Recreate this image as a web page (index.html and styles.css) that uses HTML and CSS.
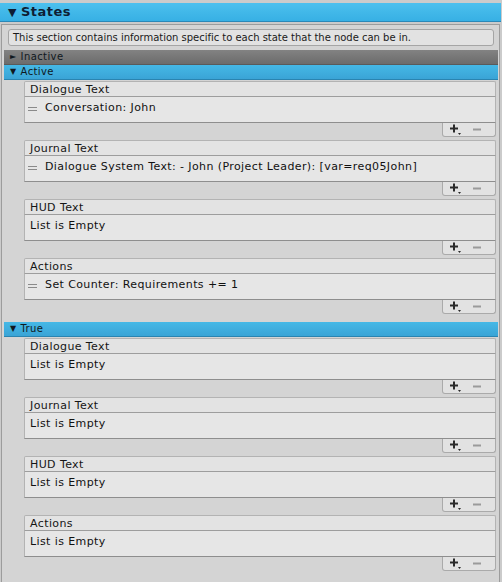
FILE: index.html
```html
<!DOCTYPE html>
<html>
<head>
<meta charset="utf-8">
<link rel="stylesheet" href="styles.css">
</head>
<body>
<div class="title"><span class="tri">▼</span>States</div>
<div class="panel">
  <div class="help">This section contains information specific to each state that the node can be in.</div>
  <div class="bar gray"><span class="arr">►</span>Inactive</div>
  <div class="bar blue"><span class="arr">▼</span>Active</div>
  <div class="lists">
    <div class="list">
      <div class="lh">Dialogue Text</div>
      <div class="lb"><span class="grip"></span>Conversation: John</div>
      <div class="lf"><svg class="plus" width="12" height="12" viewBox="0 0 12 12"><path d="M4 0.5v8M0 4.5h8" stroke="#2a2a2a" stroke-width="2"/><path d="M8 9h3l-1.5 2z" fill="#2a2a2a"/></svg><svg class="minus" width="8" height="3" viewBox="0 0 8 3"><path d="M0 1.5h8" stroke="#9a9a9a" stroke-width="2"/></svg></div>
    </div>
    <div class="list">
      <div class="lh">Journal Text</div>
      <div class="lb"><span class="grip"></span>Dialogue System Text: - John (Project Leader): [var=req05John]</div>
      <div class="lf"><svg class="plus" width="12" height="12" viewBox="0 0 12 12"><path d="M4 0.5v8M0 4.5h8" stroke="#2a2a2a" stroke-width="2"/><path d="M8 9h3l-1.5 2z" fill="#2a2a2a"/></svg><svg class="minus" width="8" height="3" viewBox="0 0 8 3"><path d="M0 1.5h8" stroke="#9a9a9a" stroke-width="2"/></svg></div>
    </div>
    <div class="list">
      <div class="lh">HUD Text</div>
      <div class="lb empty">List is Empty</div>
      <div class="lf"><svg class="plus" width="12" height="12" viewBox="0 0 12 12"><path d="M4 0.5v8M0 4.5h8" stroke="#2a2a2a" stroke-width="2"/><path d="M8 9h3l-1.5 2z" fill="#2a2a2a"/></svg><svg class="minus" width="8" height="3" viewBox="0 0 8 3"><path d="M0 1.5h8" stroke="#9a9a9a" stroke-width="2"/></svg></div>
    </div>
    <div class="list">
      <div class="lh">Actions</div>
      <div class="lb"><span class="grip"></span>Set Counter: Requirements += 1</div>
      <div class="lf"><svg class="plus" width="12" height="12" viewBox="0 0 12 12"><path d="M4 0.5v8M0 4.5h8" stroke="#2a2a2a" stroke-width="2"/><path d="M8 9h3l-1.5 2z" fill="#2a2a2a"/></svg><svg class="minus" width="8" height="3" viewBox="0 0 8 3"><path d="M0 1.5h8" stroke="#9a9a9a" stroke-width="2"/></svg></div>
    </div>
  </div>
  <div class="bar blue true"><span class="arr">▼</span>True</div>
  <div class="lists">
    <div class="list">
      <div class="lh">Dialogue Text</div>
      <div class="lb empty">List is Empty</div>
      <div class="lf"><svg class="plus" width="12" height="12" viewBox="0 0 12 12"><path d="M4 0.5v8M0 4.5h8" stroke="#2a2a2a" stroke-width="2"/><path d="M8 9h3l-1.5 2z" fill="#2a2a2a"/></svg><svg class="minus" width="8" height="3" viewBox="0 0 8 3"><path d="M0 1.5h8" stroke="#9a9a9a" stroke-width="2"/></svg></div>
    </div>
    <div class="list">
      <div class="lh">Journal Text</div>
      <div class="lb empty">List is Empty</div>
      <div class="lf"><svg class="plus" width="12" height="12" viewBox="0 0 12 12"><path d="M4 0.5v8M0 4.5h8" stroke="#2a2a2a" stroke-width="2"/><path d="M8 9h3l-1.5 2z" fill="#2a2a2a"/></svg><svg class="minus" width="8" height="3" viewBox="0 0 8 3"><path d="M0 1.5h8" stroke="#9a9a9a" stroke-width="2"/></svg></div>
    </div>
    <div class="list">
      <div class="lh">HUD Text</div>
      <div class="lb empty">List is Empty</div>
      <div class="lf"><svg class="plus" width="12" height="12" viewBox="0 0 12 12"><path d="M4 0.5v8M0 4.5h8" stroke="#2a2a2a" stroke-width="2"/><path d="M8 9h3l-1.5 2z" fill="#2a2a2a"/></svg><svg class="minus" width="8" height="3" viewBox="0 0 8 3"><path d="M0 1.5h8" stroke="#9a9a9a" stroke-width="2"/></svg></div>
    </div>
    <div class="list">
      <div class="lh">Actions</div>
      <div class="lb empty">List is Empty</div>
      <div class="lf"><svg class="plus" width="12" height="12" viewBox="0 0 12 12"><path d="M4 0.5v8M0 4.5h8" stroke="#2a2a2a" stroke-width="2"/><path d="M8 9h3l-1.5 2z" fill="#2a2a2a"/></svg><svg class="minus" width="8" height="3" viewBox="0 0 8 3"><path d="M0 1.5h8" stroke="#9a9a9a" stroke-width="2"/></svg></div>
    </div>
  </div>
</div>
</body>
</html>
```
FILE: styles.css
```css
html, body {
  margin: 0;
  padding: 0;
  background: #cbcbcb;
  height: 582px;
  overflow: hidden;
}
body {
  font-family: "DejaVu Sans", Verdana, sans-serif;
  font-size: 11px;
  color: #111;
  padding-top: 3px;
  box-sizing: border-box;
}
.title {
  height: 18px;
  line-height: 18px;
  background: linear-gradient(#4cc0ee, #37b0e4);
  border-bottom: 1px solid #2a88b8;
  color: #0e1e34;
  font-weight: bold;
  font-size: 13px;
  letter-spacing: 0.5px;
  padding-left: 8px;
  margin-right: 1px;
}
.title .tri {
  font-size: 11px;
  margin-right: 4px;
}
.panel {
  margin: 2px 2px 0 1px;
  border: 1px solid #9c9c9c;
  border-bottom: none;
  background: #d4d4d4;
  padding: 4px 1px 0 2px;
  height: 560px;
  box-sizing: border-box;
}
.help {
  margin: 0 4px 0 4px;
  height: 15px;
  line-height: 15px;
  border: 1px solid #a5a5a5;
  border-radius: 3px;
  background: #e2e2e2;
  font-size: 10px;
  padding-left: 4px;
  color: #1a1a1a;
  letter-spacing: -0.02px;
}
.bar {
  height: 14px;
  line-height: 14px;
  font-size: 10px;
  padding-left: 6px;
  color: #101820;
  letter-spacing: 0.4px;
}
.bar .arr {
  font-size: 8px;
  margin-right: 4px;
  position: relative;
  top: -1px;
}
.gray {
  margin-top: 4px;
  background: linear-gradient(#828282, #6c6c6c);
  border-bottom: 1px solid #5a5a5a;
}
.blue {
  background: linear-gradient(#45b8e6, #3aa4d6);
  border-bottom: 1px solid #2a84b0;
}
.true {
  margin-top: 8px;
}
.lists {
  padding: 1px 2px 0 20px;
  display: flex;
  flex-direction: column;
  gap: 3px;
}
.list {
  display: flex;
  flex-direction: column;
  letter-spacing: 0.4px;
}
.lh {
  height: 14px;
  line-height: 16px;
  background: #e3e3e3;
  border: 1px solid #b3b3b3;
  border-bottom: 1px solid #9d9d9d;
  border-radius: 2px 2px 0 0;
  padding-left: 5px;
  font-size: 11px;
  color: #151515;
}
.lb {
  height: 25px;
  line-height: 22px;
  background: #e6e6e6;
  border: 1px solid #b3b3b3;
  border-top: none;
  border-bottom: 1px solid #8e8e8e;
  display: flex;
  align-items: flex-start;
  padding-left: 3px;
  font-size: 11px;
}
.lb.empty {
  padding-left: 5px;
}
.grip {
  width: 9px;
  height: 2px;
  border-top: 1px solid #8a8a8a;
  border-bottom: 1px solid #8a8a8a;
  margin: 10px 8px 0 0;
}
.lf {
  align-self: flex-end;
  width: 52px;
  height: 13px;
  background: #e2e2e2;
  border: 1px solid #aaaaaa;
  border-top: none;
  border-radius: 0 0 3px 3px;
  display: flex;
  align-items: center;
}
.plus {
  margin-left: 7px;
  margin-top: 1px;
}
.minus {
  margin-left: 11px;
}
```
